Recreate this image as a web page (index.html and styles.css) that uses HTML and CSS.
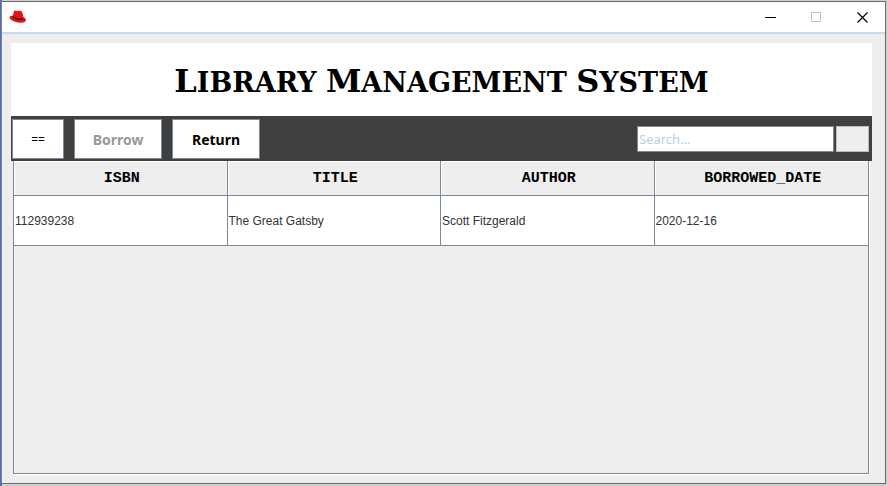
FILE: index.html
```html
<!DOCTYPE html>
<html lang="en">
<head>
<meta charset="utf-8">
<title>Library Management System</title>
<link rel="stylesheet" href="styles.css">
</head>
<body>
<div class="window">
  <header class="titlebar">
    <svg class="logo" width="18" height="14" viewBox="0 0 18 14" aria-hidden="true">
      <path fill="#e3131b" d="M3.500 6 5 1.600C5.300.8 6.200.4 7 .7c.9.4 1.600.3 2.500 0 1.700-.5 3.300.300 3.800 1.800l1.100 4.600c1.500.800 2.500 1.700 2.500 2.900 0 2-2.400 3-5.700 2.700C6.300 12.500.500 9.800.5 7.200c0-1.100 1.200-1.500 3-1.200z"/>
      <path fill="none" stroke="#160506" stroke-width="1.200" d="M4 6.600c1.800 2 6.800 3.300 9.800 2.200"/>
    </svg>
    <div class="controls">
      <button class="control" aria-label="Minimize"><svg width="11" height="11" viewBox="0 0 11 11"><path d="M0 5.500h11" stroke="#000"/></svg></button>
      <button class="control" aria-label="Maximize" disabled><svg width="11" height="11" viewBox="0 0 11 11"><path d="M.5.5h9v9h-9z" stroke="#c4c4c4" fill="none"/></svg></button>
      <button class="control" aria-label="Close"><svg width="11" height="11" viewBox="0 0 11 11"><path d="m.5.5 10 10m0-10-10 10" stroke="#000" stroke-width="1.200"/></svg></button>
    </div>
  </header>
  <main class="content">
    <h1 class="heading"><span class="cap">L</span>ibrary <span class="cap">M</span>anagement <span class="cap">S</span>ystem</h1>
    <div class="toolbar">
      <button class="button menu">==</button>
      <button class="button" disabled>Borrow</button>
      <button class="button">Return</button>
      <form class="search">
        <input class="search-field" type="text" placeholder="Search..." aria-label="Search">
        <button class="search-button" type="button" aria-label="Run search"></button>
      </form>
    </div>
    <div class="pane">
      <table class="records">
        <thead>
          <tr><th>ISBN</th><th>TITLE</th><th>AUTHOR</th><th>BORROWED_DATE</th></tr>
        </thead>
        <tbody>
          <tr><td>112939238</td><td>The Great Gatsby</td><td>Scott Fitzgerald</td><td>2020-12-16</td></tr>
        </tbody>
      </table>
    </div>
  </main>
</div>
</body>
</html>
```
FILE: styles.css
```css
* { box-sizing: border-box; }

body {
  margin: 0;
  height: 100vh;
  padding: 1px 1px 2px 1px;
  background: linear-gradient(90deg, #5d6ba0 0 2px, #d0d0d0 2px);
  font-family: "Liberation Sans", Arial, sans-serif;
}

.window {
  display: flex;
  flex-direction: column;
  height: 100%;
  border: 1px solid #6b6b6b;
  border-left-color: #7484b4;
  background: #eee;
}

.titlebar {
  display: flex;
  justify-content: space-between;
  align-items: center;
  height: 32px;
  padding-left: 7px;
  background: #fff;
  border-bottom: 2px solid #c9dceb;
}

.controls { display: flex; }

.control {
  display: flex;
  align-items: center;
  justify-content: center;
  width: 46px;
  height: 28px;
  padding: 0;
  border: 0;
  background: none;
}

.content {
  flex: 1;
  display: flex;
  flex-direction: column;
  min-height: 0;
  padding: 9px 13px 9px 9px;
}

.heading {
  margin: 0;
  height: 73px;
  background: #fff;
  color: #000;
  font: bold 27px/76px "DejaVu Serif", serif;
  text-align: center;
  text-transform: uppercase;
}

.cap { font-size: 32px; }

.toolbar {
  display: flex;
  align-items: center;
  gap: 10px;
  height: 45px;
  padding: 0 3px 0 1px;
  background: #404040;
}

.button {
  width: 88px;
  height: 40px;
  padding: 2px 0 0;
  border: 1px solid #7a8a99;
  background: #fff;
  color: #000;
  font: bold 14px "Noto Sans", sans-serif;
}

.button:disabled { color: #999; }

.menu {
  width: 52px;
  font-size: 12px;
  font-weight: normal;
}

.search {
  display: flex;
  gap: 2px;
  height: 26px;
  margin-left: auto;
}

.search-field {
  width: 197px;
  padding: 0 1px;
  border: 1px solid #7a8a99;
  background: #fff;
  font: 13px "Noto Sans", sans-serif;
}

.search-field::placeholder { color: #b8cfe5; opacity: 1; }

.search-button {
  width: 33px;
  padding: 0;
  border: 1px solid #b8bec4;
  background: #eee;
}

.pane {
  flex: 1;
  margin: 0 3px 0 2px;
  border: 1px solid #7a8a99;
  border-top: 0;
  box-shadow: 1px 1px #fff;
}

.records {
  width: 100%;
  table-layout: fixed;
  border-collapse: separate;
  border-spacing: 0;
}

th, td {
  padding: 0 1px;
  border-right: 1px solid #7a8a99;
  border-bottom: 1px solid #7a8a99;
}

th:last-child, td:last-child { border-right: 0; }

th {
  height: 35px;
  padding-left: 4px;
  box-shadow: inset 1px 1px #fff;
  color: #000;
  font: bold 15px "Liberation Mono", monospace;
  text-align: center;
}

td {
  height: 50px;
  background: #fff;
  color: #333;
  font-size: 12px;
}
```
